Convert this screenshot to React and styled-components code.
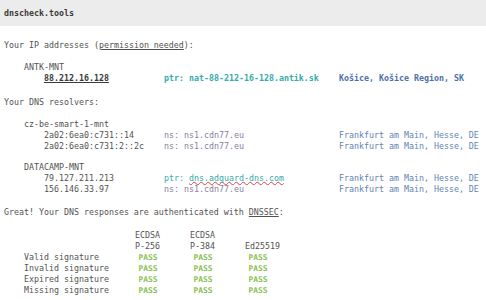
import React from "react";
import styled, { createGlobalStyle } from "styled-components";

const Global = createGlobalStyle`
  html, body { margin: 0; padding: 0; background: #fff; }
  body {
    font-family: "DejaVu Sans Mono", "Liberation Mono", monospace;
    font-size: 8.3px;
    line-height: 11px;
    color: #525252;
  }
`;

const Header = styled.header`
  height: 26px;
  background: #ececec;
  display: flex;
  align-items: center;
  padding: 0 4px;
  font-weight: bold;
  color: #3a3a3a;
`;

const Main = styled.main`
  padding: 0 4px;
  white-space: pre;
`;

const Line = styled.div`
  margin-top: ${(p) => p.$mt || 0}px;
  height: 11px;
`;

const Under = styled.span`
  text-decoration: underline;
  text-underline-offset: 1px;
`;

const Group = styled.div`
  margin-top: ${(p) => p.$mt || 0}px;
`;

const GroupName = styled.div`
  padding-left: 20px;
  height: 11px;
`;

const IpRow = styled.div`
  display: grid;
  grid-template-columns: 40px 120px 175px auto;
  height: 11px;
`;

const Ip = styled.span`
  grid-column: 2;
  font-weight: ${(p) => (p.$me ? "bold" : "normal")};
  color: ${(p) => (p.$me ? "#3a3a3a" : "inherit")};
  text-decoration: ${(p) => (p.$me ? "underline" : "none")};
  text-underline-offset: 1px;
`;

const Ptr = styled.span`
  color: ${(p) => (p.$ns ? "#8a7ca3" : "#35abab")};
  font-weight: ${(p) => (p.$bold ? "bold" : "normal")};
`;

const Wavy = styled.span`
  text-decoration: underline wavy #e04040;
  text-decoration-thickness: 1px;
  text-decoration-skip-ink: none;
  text-underline-offset: 0px;
`;

const Loc = styled.span`
  color: ${(p) => (p.$bold ? "#4d6fa8" : "#6384b3")};
  font-weight: ${(p) => (p.$bold ? "bold" : "normal")};
`;

const Table = styled.div`
  margin-top: 12px;
  display: grid;
  grid-template-columns: 20px 111px 55px 55px auto;
  grid-auto-rows: 11px;
`;

const Cell = styled.span`
  grid-column: ${(p) => p.$col};
`;

const Pass = styled.span`
  grid-column: ${(p) => p.$col};
  padding-left: 3.5px;
  color: #88bf50;
  font-weight: bold;
  font-size: 7.9px;
`;

const groups = [
  {
    name: "cz-be-smart-1-mnt",
    mt: 11,
    rows: [
      { ip: "2a02:6ea0:c731::14", ns: "ns: ns1.cdn77.eu", loc: "Frankfurt am Main, Hesse, DE" },
      { ip: "2a02:6ea0:c731:2::2c", ns: "ns: ns1.cdn77.eu", loc: "Frankfurt am Main, Hesse, DE" },
    ],
  },
  {
    name: "DATACAMP-MNT",
    mt: 10,
    rows: [
      { ip: "79.127.211.213", ptr: "dns.adguard-dns.com", loc: "Frankfurt am Main, Hesse, DE" },
      { ip: "156.146.33.97", ns: "ns: ns1.cdn77.eu", loc: "Frankfurt am Main, Hesse, DE" },
    ],
  },
];

const sigs = ["Valid signature", "Invalid signature", "Expired signature", "Missing signature"];

export default function App() {
  return (
    <>
      <Global />
      <Header>dnscheck.tools</Header>
      <Main>
        <Line $mt={13.5}>
          Your IP addresses (<Under>permission needed</Under>):
        </Line>
        <Group $mt={11}>
          <GroupName>ANTK-MNT</GroupName>
          <IpRow>
            <Ip $me>88.212.16.128</Ip>
            <Ptr $bold>ptr: nat-88-212-16-128.antik.sk</Ptr>
            <Loc $bold>Košice, Košice Region, SK</Loc>
          </IpRow>
        </Group>
        <Line $mt={13}>Your DNS resolvers:</Line>
        {groups.map((g) => (
          <Group key={g.name} $mt={g.mt}>
            <GroupName>{g.name}</GroupName>
            {g.rows.map((r) => (
              <IpRow key={r.ip}>
                <Ip>{r.ip}</Ip>
                {r.ptr ? (
                  <Ptr>
                    ptr: <Wavy>{r.ptr}</Wavy>
                  </Ptr>
                ) : (
                  <Ptr $ns>{r.ns}</Ptr>
                )}
                <Loc>{r.loc}</Loc>
              </IpRow>
            ))}
          </Group>
        ))}
        <Line $mt={12}>
          Great! Your DNS responses are authenticated with <Under>DNSSEC</Under>:
        </Line>
        <Table>
          <Cell $col={3}>ECDSA</Cell>
          <Cell $col={4}>ECDSA</Cell>
          <Cell $col={5}></Cell>
          <Cell $col={3}>P-256</Cell>
          <Cell $col={4}>P-384</Cell>
          <Cell $col={5}>Ed25519</Cell>
          {sigs.map((s) => (
            <React.Fragment key={s}>
              <Cell $col={2}>{s}</Cell>
              <Pass $col={3}>PASS</Pass>
              <Pass $col={4}>PASS</Pass>
              <Pass $col={5}>PASS</Pass>
            </React.Fragment>
          ))}
        </Table>
      </Main>
    </>
  );
}
